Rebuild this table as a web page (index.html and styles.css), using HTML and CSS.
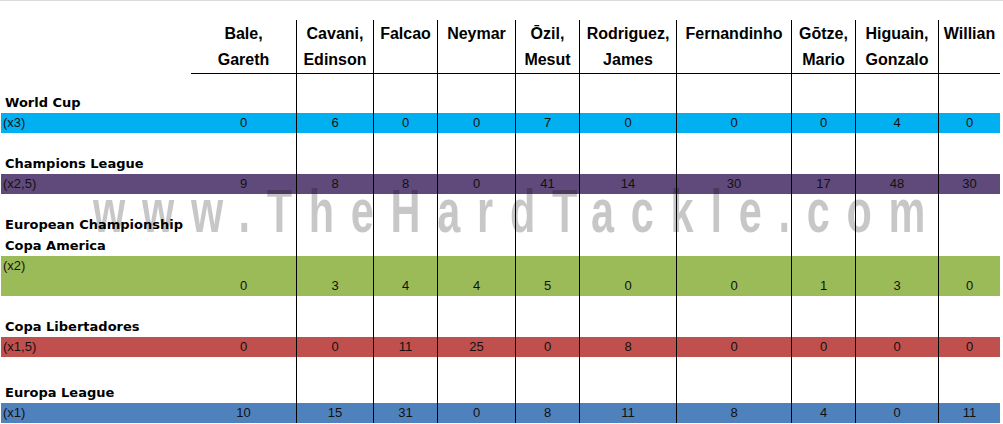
FILE: index.html
```html
<!DOCTYPE html>
<html lang="en">
<head>
<meta charset="utf-8">
<title>Goals by competition</title>
<link rel="stylesheet" href="styles.css">
</head>
<body>
<div class="sheet">
  <div class="row head">
    <div class="cell first"></div>
    <div class="cell name nb">Bale,<br>Gareth</div>
    <div class="cell name">Cavani,<br>Edinson</div>
    <div class="cell name">Falcao</div>
    <div class="cell name">Neymar</div>
    <div class="cell name">Ōzil,<br>Mesut</div>
    <div class="cell name">Rodriguez,<br>James</div>
    <div class="cell name">Fernandinho</div>
    <div class="cell name">Gōtze,<br>Mario</div>
    <div class="cell name">Higuain,<br>Gonzalo</div>
    <div class="cell name">Willian</div>
  </div>

  <div class="row label h40">
    <div class="cell first comp"><span>World Cup</span></div>
    <div class="cell nb"></div><div class="cell"></div><div class="cell"></div><div class="cell"></div><div class="cell"></div><div class="cell"></div><div class="cell"></div><div class="cell"></div><div class="cell"></div><div class="cell"></div>
  </div>
  <div class="row band cyan">
    <div class="cell first mult">(x3)</div>
    <div class="cell num nb">0</div><div class="cell num">6</div><div class="cell num">0</div><div class="cell num">0</div><div class="cell num">7</div><div class="cell num">0</div><div class="cell num">0</div><div class="cell num">0</div><div class="cell num">4</div><div class="cell num">0</div>
  </div>

  <div class="row label h41">
    <div class="cell first comp"><span>Champions League</span></div>
    <div class="cell nb"></div><div class="cell"></div><div class="cell"></div><div class="cell"></div><div class="cell"></div><div class="cell"></div><div class="cell"></div><div class="cell"></div><div class="cell"></div><div class="cell"></div>
  </div>
  <div class="row band purple">
    <div class="cell first mult">(x2,5)</div>
    <div class="cell num nb">9</div><div class="cell num">8</div><div class="cell num">8</div><div class="cell num">0</div><div class="cell num">41</div><div class="cell num">14</div><div class="cell num">30</div><div class="cell num">17</div><div class="cell num">48</div><div class="cell num">30</div>
  </div>

  <div class="row label h62">
    <div class="cell first comp two"><span>European Championship</span><span>Copa America</span></div>
    <div class="cell nb"></div><div class="cell"></div><div class="cell"></div><div class="cell"></div><div class="cell"></div><div class="cell"></div><div class="cell"></div><div class="cell"></div><div class="cell"></div><div class="cell"></div>
  </div>
  <div class="row band green tall">
    <div class="cell first mult top">(x2)</div>
    <div class="cell num nb">0</div><div class="cell num">3</div><div class="cell num">4</div><div class="cell num">4</div><div class="cell num">5</div><div class="cell num">0</div><div class="cell num">0</div><div class="cell num">1</div><div class="cell num">3</div><div class="cell num">0</div>
  </div>

  <div class="row label h41">
    <div class="cell first comp"><span>Copa Libertadores</span></div>
    <div class="cell nb"></div><div class="cell"></div><div class="cell"></div><div class="cell"></div><div class="cell"></div><div class="cell"></div><div class="cell"></div><div class="cell"></div><div class="cell"></div><div class="cell"></div>
  </div>
  <div class="row band red">
    <div class="cell first mult">(x1,5)</div>
    <div class="cell num nb">0</div><div class="cell num">0</div><div class="cell num">11</div><div class="cell num">25</div><div class="cell num">0</div><div class="cell num">8</div><div class="cell num">0</div><div class="cell num">0</div><div class="cell num">0</div><div class="cell num">0</div>
  </div>

  <div class="row label h46">
    <div class="cell first comp"><span>Europa League</span></div>
    <div class="cell nb"></div><div class="cell"></div><div class="cell"></div><div class="cell"></div><div class="cell"></div><div class="cell"></div><div class="cell"></div><div class="cell"></div><div class="cell"></div><div class="cell"></div>
  </div>
  <div class="row band steel">
    <div class="cell first mult">(x1)</div>
    <div class="cell num nb">10</div><div class="cell num">15</div><div class="cell num">31</div><div class="cell num">0</div><div class="cell num">8</div><div class="cell num">11</div><div class="cell num">8</div><div class="cell num">4</div><div class="cell num">0</div><div class="cell num">11</div>
  </div>

  <div class="watermark">www.TheHardTackle.com</div>
</div>
</body>
</html>
```

FILE: styles.css
```css
html, body {
  margin: 0;
  padding: 0;
  background: #ffffff;
}

body {
  width: 1003px;
  height: 424px;
  overflow: hidden;
}

.sheet {
  position: relative;
  border-top: 1px solid #dadada;
  padding-top: 19px;
  padding-left: 1px;
  font-family: "Liberation Sans", Arial, sans-serif;
  color: #111;
}

.row {
  display: grid;
  grid-template-columns: 190px 105px 77px 64px 78px 64px 97px 115px 64px 83px 62px;
  width: 999px;
}

.cell {
  box-sizing: border-box;
  border-left: 1px solid #000;
  min-width: 0;
}

.cell.first,
.cell.nb {
  border-left: none;
}

/* header */
.head {
  height: 53px;
}

.head .name {
  border-bottom: 1px solid #000;
  font-weight: 700;
  font-size: 16px;
  line-height: 26px;
  padding-top: 1px;
  text-align: center;
  white-space: nowrap;
  color: #000;
}

/* label rows */
.h40 { height: 40px; }
.h41 { height: 41px; }
.h46 { height: 46px; }
.h62 { height: 62px; }

.comp {
  display: flex;
  flex-direction: column;
  justify-content: flex-end;
  padding-left: 4px;
  font-family: "DejaVu Sans", Verdana, sans-serif;
  font-weight: 700;
  font-size: 13px;
  line-height: 20px;
  color: #000;
  white-space: nowrap;
}

.comp.two {
  line-height: 21px;
}

/* bands */
.band {
  height: 20px;
  font-size: 13px;
  line-height: 20px;
}

.band.tall {
  height: 40px;
}

.cyan { background: #00b0f0; }
.purple { background: #604a7b; }
.green { background: #9bbb59; }
.red { background: #c0504d; }
.steel { background: #4f81bd; }

.mult {
  padding-left: 2px;
}

.num {
  text-align: center;
}

.tall .num {
  display: flex;
  align-items: flex-end;
  justify-content: center;
}

/* watermark */
.watermark {
  position: absolute;
  left: 93px;
  top: 180px;
  font-family: "Liberation Sans", Arial, sans-serif;
  font-weight: 700;
  font-size: 61px;
  line-height: 1;
  letter-spacing: 24.6px;
  color: rgba(0, 0, 0, 0.22);
  white-space: nowrap;
  transform: scaleX(0.68);
  transform-origin: left top;
  pointer-events: none;
}
```
